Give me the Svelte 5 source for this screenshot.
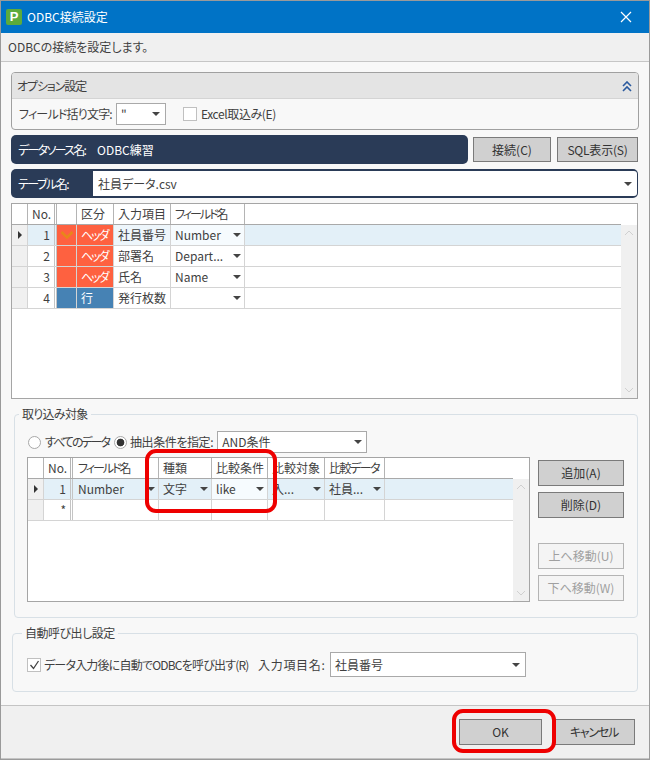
<script>
  const fields = [
    { no: 1, color: 'head', kind: 'ヘッダ', item: '社員番号', field: 'Number', current: true },
    { no: 2, color: 'head', kind: 'ヘッダ', item: '部署名', field: 'Depart...' },
    { no: 3, color: 'head', kind: 'ヘッダ', item: '氏名', field: 'Name' },
    { no: 4, color: 'line', kind: '行', item: '発行枚数', field: '' }
  ];
</script>

<div class="window">
  <header class="titlebar">
    <span class="logo">P</span>
    <span class="title">ODBC接続設定</span>
    <svg class="close" width="12" height="12" viewBox="0 0 12 12"><path d="M1 1l10 10M11 1L1 11" stroke="#fff" stroke-width="1.2" fill="none"/></svg>
  </header>
  <div class="subbar">ODBCの接続を設定します。</div>

  <main class="content">
    <section class="options">
      <div class="options-head">
        <span class="options-title">オプション設定</span>
        <svg width="10" height="11" viewBox="0 0 10 11"><path d="M1 5l4-4 4 4M1 10l4-4 4 4" stroke="#2b5a9e" stroke-width="1.6" fill="none"/></svg>
      </div>
      <div class="options-row">
        <span class="quote-label">フィールド括り文字:</span>
        <div class="select quote"><span>"</span><i class="arrow"></i></div>
        <span class="check"></span>
        <span class="excel">Excel取込み(E)</span>
      </div>
    </section>

    <div class="source-row">
      <div class="navy source"><span class="navy-label">データソース名:</span><span>ODBC練習</span></div>
      <button class="btn connect">接続(C)</button>
      <button class="btn sql">SQL表示(S)</button>
    </div>

    <div class="navy table-row">
      <span class="table-label">テーブル名:</span>
      <div class="table-input"><span>社員データ.csv</span><i class="arrow"></i></div>
    </div>

    <div class="grid fields-grid">
      <div class="grid-body">
        <div class="row head">
          <div class="c sel"></div><div class="c no">No.</div><div class="c col"></div>
          <div class="c kind">区分</div><div class="c item">入力項目</div><div class="c field">フィールド名</div><div class="c rest"></div>
        </div>
        {#each fields as f}
          <div class="row" class:current={f.current}>
            <div class="c sel">{#if f.current}<i class="pointer"></i>{/if}</div>
            <div class="c no num">{f.no}</div>
            <div class="c col {f.color}">
              {#if f.current}
                <svg width="14" height="10" viewBox="0 0 14 10"><path d="M1.5 2l5.5 5.5L12.5 2" stroke="#e8861a" stroke-width="2.6" fill="none"/></svg>
              {/if}
            </div>
            <div class="c kind {f.color}">{f.kind}</div>
            <div class="c item">{f.item}</div>
            <div class="c field drop">{f.field}<i class="arrow"></i></div>
            <div class="c rest"></div>
          </div>
        {/each}
      </div>
      <div class="scroll top-gap">
        <svg width="10" height="6" viewBox="0 0 10 6"><path d="M1 5l4-4 4 4" stroke="#d0d0d0" fill="none"/></svg>
        <svg width="10" height="6" viewBox="0 0 10 6"><path d="M1 1l4 4 4-4" stroke="#d0d0d0" fill="none"/></svg>
      </div>
    </div>

    <fieldset class="group target">
      <legend>取り込み対象</legend>
      <div class="radio-row">
        <span class="radio"></span><span class="radio-all">すべてのデータ</span>
        <span class="radio on"></span><span class="radio-cond">抽出条件を指定:</span>
        <div class="select cond"><span>AND条件</span><i class="arrow"></i></div>
      </div>
      <div class="target-body">
        <div class="grid cond-grid">
          <div class="grid-body">
            <div class="row head">
              <div class="c sel"></div><div class="c no">No.</div><div class="c fname">フィールド名</div>
              <div class="c type">種類</div><div class="c cmp">比較条件</div><div class="c obj">比較対象</div><div class="c data">比較データ</div><div class="c rest"></div>
            </div>
            <div class="row current">
              <div class="c sel"><i class="pointer"></i></div><div class="c no num">1</div>
              <div class="c fname drop">Number<i class="arrow"></i></div>
              <div class="c type drop">文字<i class="arrow"></i></div>
              <div class="c cmp drop">like<i class="arrow"></i></div>
              <div class="c obj drop">入...<i class="arrow"></i></div>
              <div class="c data drop">社員...<i class="arrow"></i></div>
              <div class="c rest"></div>
            </div>
            <div class="row">
              <div class="c sel"></div><div class="c no num">*</div>
              <div class="c fname"></div><div class="c type"></div><div class="c cmp"></div><div class="c obj"></div><div class="c data"></div><div class="c rest"></div>
            </div>
          </div>
          <div class="scroll top-gap">
            <svg width="10" height="6" viewBox="0 0 10 6"><path d="M1 5l4-4 4 4" stroke="#d0d0d0" fill="none"/></svg>
            <svg width="10" height="6" viewBox="0 0 10 6"><path d="M1 1l4 4 4-4" stroke="#d0d0d0" fill="none"/></svg>
          </div>
        </div>
        <div class="side-btns">
          <button class="btn side">追加(A)</button>
          <button class="btn side">削除(D)</button>
          <button class="btn side off push">上へ移動(U)</button>
          <button class="btn side off">下へ移動(W)</button>
        </div>
      </div>
    </fieldset>

    <fieldset class="group auto">
      <legend>自動呼び出し設定</legend>
      <div class="auto-row">
        <span class="check small">
          <svg width="11" height="10" viewBox="0 0 11 10"><path d="M1.5 5l3 3.5L9.5 1" stroke="#444" stroke-width="1.3" fill="none"/></svg>
        </span>
        <span class="auto-text">データ入力後に自動でODBCを呼び出す(R)</span>
        <span class="auto-label">入力項目名:</span>
        <div class="select item-select"><span>社員番号</span><i class="arrow"></i></div>
      </div>
    </fieldset>
  </main>

  <footer class="footer">
    <button class="btn ok">OK</button>
    <button class="btn cancel">キャンセル</button>
  </footer>

  <div class="mark mark-grid"></div>
  <div class="mark mark-ok"></div>
</div>

<style>
  :global(body) {
    margin: 0;
    background: #fff;
  }

  .window {
    position: relative;
    width: 650px;
    height: 760px;
    box-sizing: border-box;
    border: 1px solid #9a9a9a;
    background: #f8f8f8;
    display: flex;
    flex-direction: column;
    font-family: "Noto Sans CJK JP", "Noto Sans", sans-serif;
    font-size: 12px;
    line-height: 16px;
    font-feature-settings: "palt";
    color: #3f3f3f;
    overflow: hidden;
  }

  .titlebar {
    height: 32px;
    flex: none;
    background: #0073c6;
    color: #fff;
    display: flex;
    align-items: center;
    padding: 0 17px 0 5px;
  }

  .logo {
    width: 16px;
    height: 16px;
    border-radius: 2px;
    background: #5cab3c;
    color: #fff;
    font: bold 13px/16px "Liberation Sans", sans-serif;
    text-align: center;
    margin-right: 5px;
  }

  .title {
    flex: 1;
  }

  .subbar {
    height: 29px;
    flex: none;
    box-sizing: border-box;
    background: #f0f0f0;
    border-bottom: 1px solid #c6c6c6;
    padding: 6px 7px 0;
  }

  .content {
    flex: 1;
    padding: 10px 10px 0;
    display: flex;
    flex-direction: column;
  }

  .options {
    height: 58px;
    box-sizing: border-box;
    border: 1px solid #a0a0a0;
    border-radius: 4px;
    overflow: hidden;
  }

  .options-head {
    height: 26px;
    box-sizing: border-box;
    background: #e4e4e4;
    border-bottom: 1px solid #d4d4d4;
    display: flex;
    align-items: center;
    justify-content: space-between;
    padding: 1px 6px 0 5px;
  }

  .options-title {
    letter-spacing: -1.1px;
  }

  .options-row {
    height: 30px;
    display: flex;
    align-items: center;
    padding-left: 7px;
  }

  .quote-label {
    width: 97px;
    white-space: nowrap;
    letter-spacing: -0.8px;
  }

  .select {
    box-sizing: border-box;
    background: #fff;
    border: 1px solid #a9a9a9;
    display: flex;
    align-items: center;
    justify-content: space-between;
    padding: 0 5px 0 4px;
  }

  .quote {
    width: 50px;
    height: 22px;
    margin-right: 17px;
  }

  .check {
    width: 14px;
    height: 14px;
    box-sizing: border-box;
    background: #fff;
    border: 1px solid #c0c0c0;
    margin-right: 4px;
  }

  .excel {
    letter-spacing: -0.4px;
  }

  .arrow {
    width: 0;
    height: 0;
    border-left: 4px solid transparent;
    border-right: 4px solid transparent;
    border-top: 4px solid #444;
    flex: none;
    margin-left: auto;
  }

  .source-row {
    margin-top: 5px;
    height: 29px;
    display: flex;
    align-items: center;
  }

  .navy {
    background: #2a3b57;
    color: #fff;
    border-radius: 5px;
    box-sizing: border-box;
  }

  .source {
    width: 457px;
    height: 29px;
    display: flex;
    align-items: center;
    padding-left: 7px;
  }

  .navy-label {
    width: 79px;
    white-space: nowrap;
    letter-spacing: -1.7px;
  }

  .btn {
    box-sizing: border-box;
    padding: 0;
    font: inherit;
    font-feature-settings: inherit;
    color: #333;
    background: #d0d0d0;
    border: 1px solid #7a7a7a;
  }

  .connect {
    width: 78px;
    height: 25px;
    margin-left: 5px;
  }

  .sql {
    width: 81px;
    height: 25px;
    margin-left: 6px;
    letter-spacing: -0.2px;
  }

  .table-row {
    margin-top: 5px;
    height: 29px;
    padding: 2px 1px 2px 7px;
    display: flex;
    align-items: stretch;
    width: 627px;
  }

  .table-label {
    width: 75px;
    align-self: center;
    letter-spacing: -1.5px;
  }

  .table-input {
    flex: 1;
    background: #fff;
    color: #3f3f3f;
    display: flex;
    align-items: center;
    justify-content: space-between;
    padding: 0 5px;
    border-radius: 0 3px 3px 0;
  }

  .grid {
    box-sizing: border-box;
    border: 1px solid #a5a5a5;
    background: #fff;
    display: flex;
    position: relative;
  }

  .fields-grid {
    margin-top: 5px;
    width: 627px;
    height: 196px;
  }

  .grid-body {
    flex: 1;
    min-width: 0;
  }

  .row {
    display: flex;
    height: 21px;
    box-sizing: border-box;
    border-bottom: 1px solid #d4d4d4;
  }

  .row.head {
    height: 21px;
    border-bottom: 1px solid #a9a9a9;
  }

  .row.current {
    background: #e3f0f8;
  }

  .c {
    box-sizing: border-box;
    border-right: 1px solid #d4d4d4;
    padding: 0 4px;
    display: flex;
    align-items: center;
    white-space: nowrap;
    overflow: hidden;
    flex: none;
  }

  .head .c {
    border-right-color: #b4b4b4;
  }

  .sel {
    width: 16px;
    background: #f0f0f0;
    padding: 0;
    justify-content: center;
  }

  .head .sel {
    background: #fff;
  }

  .pointer {
    border-top: 4px solid transparent;
    border-bottom: 4px solid transparent;
    border-left: 4px solid #333;
  }

  .no {
    width: 29px;
    border-right: 3px double #c4c4c4;
  }

  .num {
    justify-content: flex-end;
  }

  .fields-grid .col {
    width: 20px;
    justify-content: center;
    padding: 0;
  }

  .kind {
    width: 37px;
    letter-spacing: -2px;
  }

  .head .kind {
    letter-spacing: 0;
  }

  .item {
    width: 57px;
  }

  .field {
    width: 74px;
  }

  .head .field,
  .head .fname {
    letter-spacing: -2px;
  }

  .current .item {
    background: #eef6fb;
  }

  .current .field,
  .current .cmp {
    background: #f6fbfe;
  }

  .rest {
    flex: 1;
    border-right: none;
  }

  .row .c.head {
    background: #fe6140;
    color: #fff;
  }

  .row .c.line {
    background: #4682b4;
    color: #fff;
  }

  .drop {
    justify-content: space-between;
    padding-right: 3px;
  }

  .scroll {
    width: 16px;
    flex: none;
    background: #f0f0f0;
    display: flex;
    flex-direction: column;
    justify-content: space-between;
    align-items: center;
    padding: 5px 0;
    box-sizing: border-box;
  }

  .top-gap {
    margin-top: 21px;
  }

  .group {
    margin: 0;
    padding: 0;
    border: 1px solid #d8e0e6;
    border-radius: 4px;
    min-width: 0;
    box-sizing: border-box;
  }

  .group legend {
    padding: 0 3px;
    line-height: 16px;
  }

  .target {
    margin: 7px 0 0 3px;
    height: 212px;
    padding: 0 12px;
    width: 624px;
  }

  .target legend {
    margin-left: -8px;
    letter-spacing: -0.7px;
  }

  .radio-row {
    display: flex;
    align-items: center;
    height: 22px;
    margin-top: 9px;
    margin-left: 1px;
  }

  .radio {
    width: 13px;
    height: 13px;
    box-sizing: border-box;
    border: 1px solid #a8a8a8;
    border-radius: 50%;
    background: #fff;
    margin-right: 4px;
    position: relative;
  }

  .radio.on {
    margin-left: 5px;
    margin-right: 3px;
    background: radial-gradient(circle, #333 0 3.5px, #fff 4.2px);
  }

  .radio-all {
    letter-spacing: -2px;
  }

  .radio-cond {
    letter-spacing: -0.4px;
  }

  .cond {
    width: 150px;
    height: 22px;
    margin-left: 4px;
    padding-right: 4px;
  }

  .target-body {
    display: flex;
    margin-top: 4px;
  }

  .cond-grid {
    width: 503px;
    height: 145px;
  }

  .cond-grid .fname {
    width: 86px;
    padding-left: 5px;
  }

  .type {
    width: 53px;
  }

  .cmp {
    width: 56px;
  }

  .obj {
    width: 57px;
  }

  .data {
    width: 60px;
  }

  .head .data {
    letter-spacing: -1.5px;
  }

  .side-btns {
    width: 86px;
    margin-left: 8px;
    margin-top: 3px;
    display: flex;
    flex-direction: column;
    gap: 6px;
    height: 142px;
  }

  .side {
    height: 26px;
    width: 86px;
  }

  .side.off {
    background: #f4f4f4;
    border-color: #b4b4b4;
    color: #a0a0a0;
  }

  .push {
    margin-top: 19px;
  }

  .auto {
    margin: 7px 0 0 1px;
    height: 67px;
    width: 626px;
    padding: 0 14px;
  }

  .auto legend {
    margin-left: -5px;
    letter-spacing: -0.5px;
  }

  .auto-row {
    display: flex;
    align-items: center;
    height: 25px;
    margin-top: 11px;
  }

  .check.small {
    width: 14px;
    height: 14px;
    margin-right: 3px;
    display: flex;
    align-items: center;
    justify-content: center;
  }

  .auto-text {
    letter-spacing: -0.8px;
    white-space: nowrap;
    width: 214px;
  }

  .auto-label {
    width: 72px;
    letter-spacing: 0.7px;
    white-space: nowrap;
  }

  .item-select {
    width: 196px;
    height: 25px;
  }

  .footer {
    height: 54px;
    flex: none;
    box-sizing: border-box;
    background: #f0f0f0;
    border-top: 1px solid #c4c4c4;
    border-bottom: 1px solid #c4c4c4;
    display: flex;
    justify-content: flex-end;
    align-items: center;
    padding: 0 14px 0 0;
  }

  .ok {
    width: 83px;
    height: 26px;
  }

  .cancel {
    width: 82px;
    height: 26px;
    margin-left: 11px;
    letter-spacing: -1.2px;
  }

  /* red annotation frames on top of the dialog */
  .mark {
    position: absolute;
    box-sizing: border-box;
    border: 4px solid #ee0000;
    border-radius: 11px;
    pointer-events: none;
  }

  .mark-grid {
    left: 144px;
    top: 448px;
    width: 132px;
    height: 64px;
  }

  .mark-ok {
    left: 451px;
    top: 708px;
    width: 104px;
    height: 44px;
  }
</style>
